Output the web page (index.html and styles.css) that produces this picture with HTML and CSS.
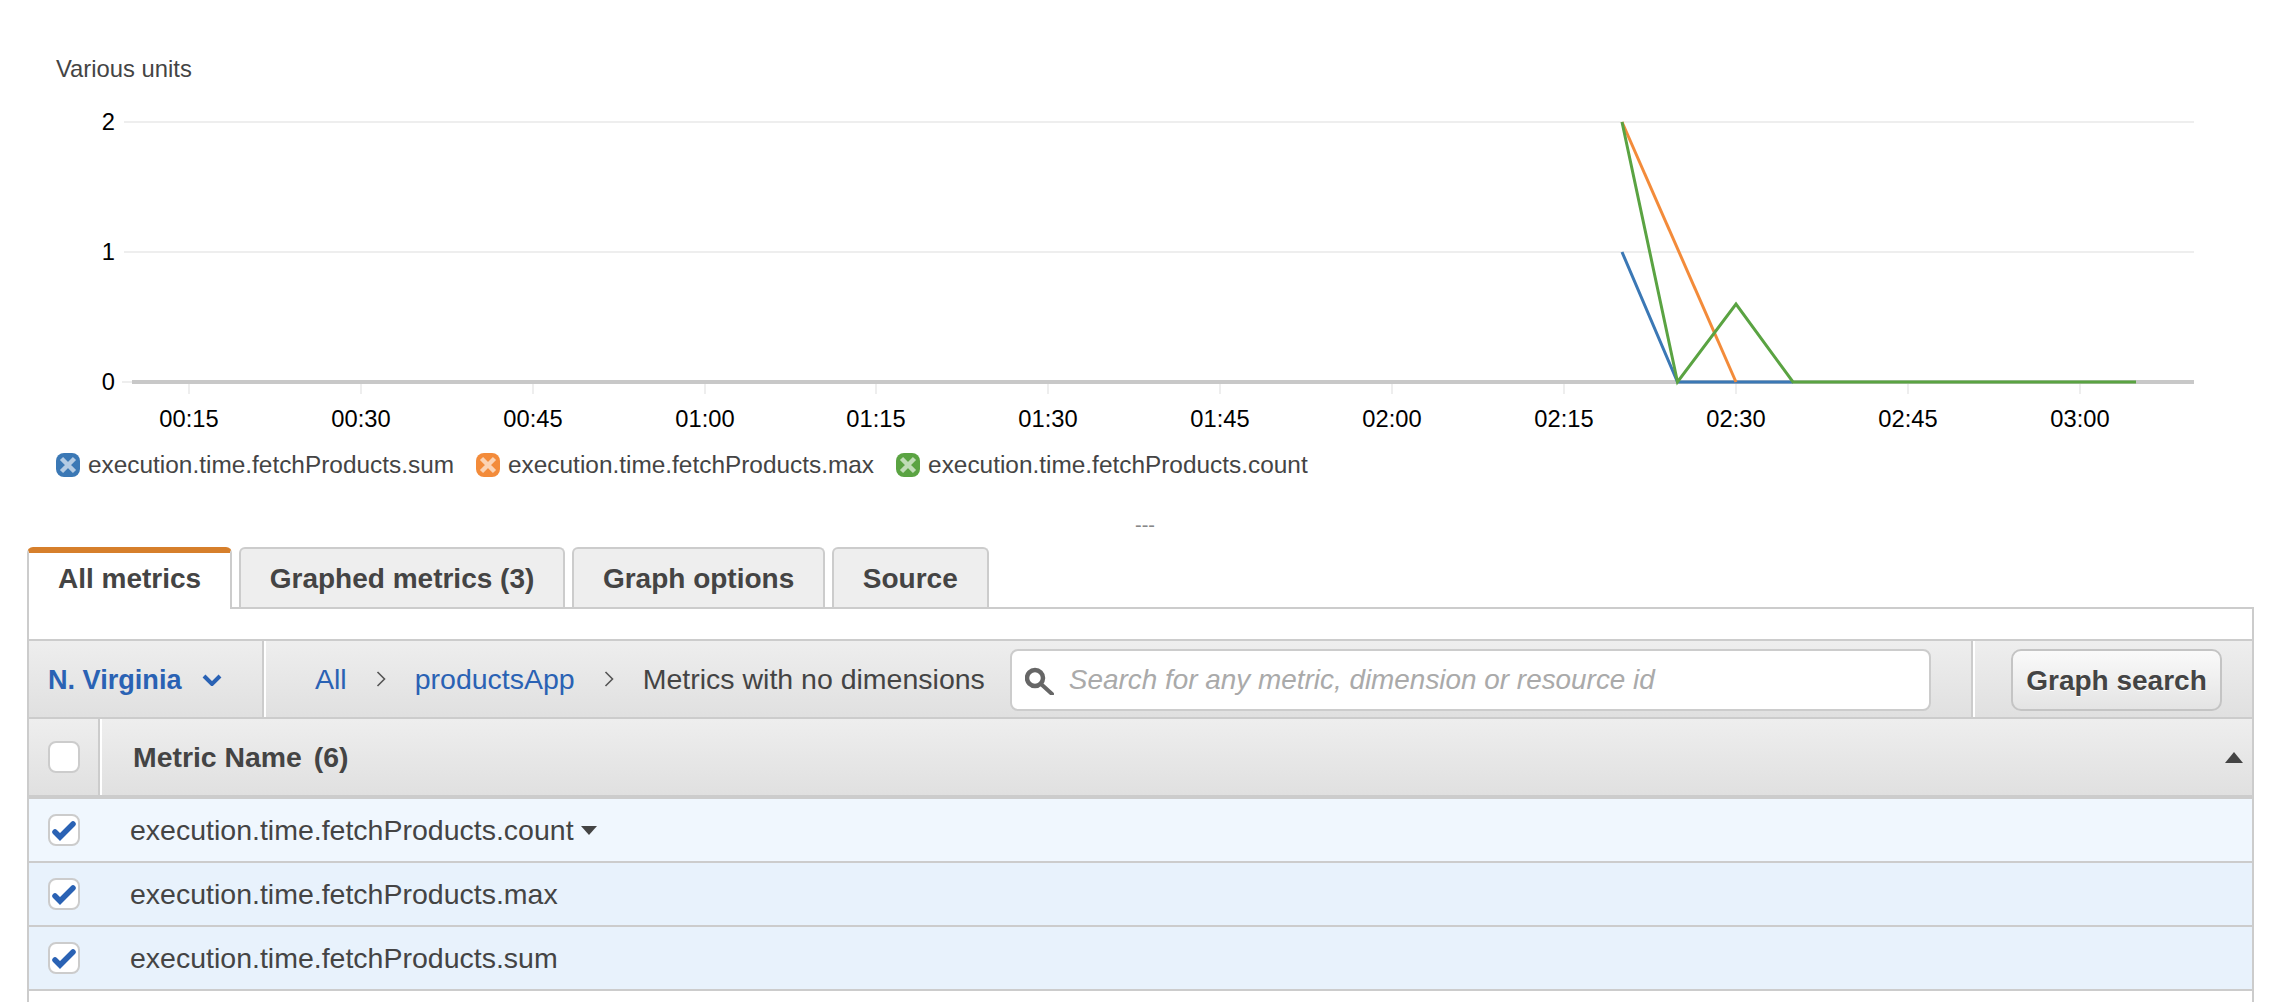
FILE: index.html
```html
<!DOCTYPE html>
<html>
<head>
	<meta charset="utf-8">
	<title>Metrics</title>
	<link rel="stylesheet" href="styles.css">
</head>
<body>
<div class="chart">
	<div class="units">Various units</div>
	<svg class="plot" width="2282" height="340" viewBox="0 100 2282 340">
		<g class="grid">
			<line x1="124" y1="122" x2="2194" y2="122"/>
			<line x1="124" y1="252" x2="2194" y2="252"/>
			<line x1="122" y1="382" x2="132" y2="382"/>
			<line x1="189" y1="384" x2="189" y2="394"/>
			<line x1="361" y1="384" x2="361" y2="394"/>
			<line x1="533" y1="384" x2="533" y2="394"/>
			<line x1="705" y1="384" x2="705" y2="394"/>
			<line x1="876" y1="384" x2="876" y2="394"/>
			<line x1="1048" y1="384" x2="1048" y2="394"/>
			<line x1="1220" y1="384" x2="1220" y2="394"/>
			<line x1="1392" y1="384" x2="1392" y2="394"/>
			<line x1="1564" y1="384" x2="1564" y2="394"/>
			<line x1="1736" y1="384" x2="1736" y2="394"/>
			<line x1="1908" y1="384" x2="1908" y2="394"/>
			<line x1="2080" y1="384" x2="2080" y2="394"/>
		</g>
		<line class="axis" x1="132" y1="382" x2="2194" y2="382"/>
		<g class="ylabels">
			<text x="115" y="130">2</text>
			<text x="115" y="260">1</text>
			<text x="115" y="390">0</text>
		</g>
		<g class="xlabels">
			<text x="189" y="427">00:15</text>
			<text x="361" y="427">00:30</text>
			<text x="533" y="427">00:45</text>
			<text x="705" y="427">01:00</text>
			<text x="876" y="427">01:15</text>
			<text x="1048" y="427">01:30</text>
			<text x="1220" y="427">01:45</text>
			<text x="1392" y="427">02:00</text>
			<text x="1564" y="427">02:15</text>
			<text x="1736" y="427">02:30</text>
			<text x="1908" y="427">02:45</text>
			<text x="2080" y="427">03:00</text>
		</g>
		<polyline class="series blue" points="1622,252 1677.5,382 1793,382"/>
		<polyline class="series orange" points="1622,122 1736,382"/>
		<polyline class="series green" points="1622,122 1677.5,382 1736,304 1793,382 2136,382"/>
	</svg>
	<div class="legend">
		<div class="legend-item">
			<svg class="legend-icon" width="24" height="24" viewBox="0 0 24 24"><rect width="24" height="24" rx="8" fill="#3b78b5"/><path d="M5.5 5.5l13 13M18.5 5.5l-13 13" class="cross"/></svg>
			<span>execution.time.fetchProducts.sum</span>
		</div>
		<div class="legend-item">
			<svg class="legend-icon" width="24" height="24" viewBox="0 0 24 24"><rect width="24" height="24" rx="8" fill="#f38b3a"/><path d="M5.5 5.5l13 13M18.5 5.5l-13 13" class="cross"/></svg>
			<span>execution.time.fetchProducts.max</span>
		</div>
		<div class="legend-item">
			<svg class="legend-icon" width="24" height="24" viewBox="0 0 24 24"><rect width="24" height="24" rx="8" fill="#5aa342"/><path d="M5.5 5.5l13 13M18.5 5.5l-13 13" class="cross"/></svg>
			<span>execution.time.fetchProducts.count</span>
		</div>
	</div>
</div>
<div class="divider">---</div>
<div class="metrics">
	<ul class="tabs">
		<li class="tab current">All metrics</li>
		<li class="tab">Graphed metrics (3)</li>
		<li class="tab">Graph options</li>
		<li class="tab">Source</li>
	</ul>
	<div class="panel">
		<div class="spacer"></div>
		<div class="toolbar">
			<div class="region">
				<span>N. Virginia</span>
				<svg width="20" height="12" viewBox="0 0 20 12"><path d="M2 2l8 8 8-8" fill="none" stroke="#2a62b4" stroke-width="4"/></svg>
			</div>
			<div class="crumbs">
				<a>All</a>
				<svg class="sep" width="10" height="16" viewBox="0 0 10 16"><path d="M1.5 1l7 7-7 7" fill="none" stroke="#555" stroke-width="1.6"/></svg>
				<a>productsApp</a>
				<svg class="sep" width="10" height="16" viewBox="0 0 10 16"><path d="M1.5 1l7 7-7 7" fill="none" stroke="#555" stroke-width="1.6"/></svg>
				<span>Metrics with no dimensions</span>
			</div>
			<div class="search">
				<svg width="29" height="29" viewBox="0 0 29 29"><circle cx="10" cy="12" r="8" fill="none" stroke="#666" stroke-width="4.5"/><path d="M16 18l11 10" stroke="#666" stroke-width="4" stroke-linecap="round"/></svg>
				<span>Search for any metric, dimension or resource id</span>
			</div>
			<div class="graph-cell">
				<div class="button">Graph search</div>
			</div>
		</div>
		<div class="head">
			<div class="check-cell"><div class="check"></div></div>
			<div class="head-name">
				<b>Metric Name</b><b class="total">(6)</b>
				<i class="sort"></i>
			</div>
		</div>
		<div class="row first">
			<div class="check-cell"><div class="check"><svg width="28" height="28" viewBox="0 0 28 28"><path d="M5 16l5 5L23 8" class="tick"/></svg></div></div>
			<div class="row-name">execution.time.fetchProducts.count<i class="more"></i></div>
		</div>
		<div class="row">
			<div class="check-cell"><div class="check"><svg width="28" height="28" viewBox="0 0 28 28"><path d="M5 16l5 5L23 8" class="tick"/></svg></div></div>
			<div class="row-name">execution.time.fetchProducts.max</div>
		</div>
		<div class="row">
			<div class="check-cell"><div class="check"><svg width="28" height="28" viewBox="0 0 28 28"><path d="M5 16l5 5L23 8" class="tick"/></svg></div></div>
			<div class="row-name">execution.time.fetchProducts.sum</div>
		</div>
		<div class="rest"></div>
	</div>
</div>
</body>
</html>
```

FILE: styles.css
```css
*{
	margin:0;
	padding:0;
	box-sizing:border-box;
	list-style:none;
}
html,body{
	height:1002px;
	overflow:hidden;
}
body{
	background:#fff;
	color:#444;
	font-family:"Liberation Sans",Arial,sans-serif;
	font-size:26px;
}
.chart{
	height:510px;
}
.units{
	height:100px;
	padding:55px 0 0 56px;
	font-size:23.8px;
	line-height:28px;
}
.plot{
	display:block;
}
.grid line{
	stroke:#eee;
	stroke-width:2;
}
.axis{
	stroke:#c8c8c8;
	stroke-width:4;
}
.plot text{
	font-size:23.7px;
	fill:#000;
}
.ylabels text{
	text-anchor:end;
}
.xlabels text{
	text-anchor:middle;
}
.series{
	fill:none;
	stroke-width:3;
}
.blue{
	stroke:#3b78b5;
}
.orange{
	stroke:#f38b3a;
}
.green{
	stroke:#5aa342;
}
.legend{
	display:flex;
	gap:22px;
	height:24px;
	margin:13px 0 0 56px;
}
.legend-item{
	display:flex;
	align-items:center;
	gap:8px;
	font-size:24.4px;
}
.legend-icon{
	flex:none;
}
.cross{
	fill:none;
	stroke:#fff;
	stroke-width:4.5;
	opacity:.62;
}
.divider{
	height:37px;
	line-height:30px;
	text-align:center;
	font-size:20px;
	color:#888;
	padding-left:8px;
}
.metrics{
	padding:0 28px 0 27px;
}
.tabs{
	display:flex;
	gap:6.6px;
	height:62px;
	position:relative;
}
.tab{
	height:60px;
	padding:0 29px;
	border:2px solid #ccc;
	border-bottom:none;
	border-radius:6px 6px 0 0;
	background:#eee;
	font-size:28px;
	font-weight:bold;
	line-height:60px;
}
.tab.current{
	height:62px;
	padding:0 29px;
	border-top:6px solid #d67f2b;
	background:#fff;
	line-height:52px;
	position:relative;
	z-index:1;
}
.panel{
	margin-top:-2px;
	border:2px solid #ccc;
	border-bottom:none;
}
.spacer{
	height:30px;
}
.toolbar{
	display:flex;
	height:80px;
	border-top:2px solid #ccc;
	border-bottom:2px solid #ccc;
	background:linear-gradient(#eee,#e0e0e0);
}
.region{
	display:flex;
	align-items:center;
	gap:20px;
	width:235px;
	padding:2px 0 0 19px;
	border-right:2px solid #ccc;
	color:#2a62b4;
	font-size:27.1px;
	font-weight:bold;
}
.crumbs{
	display:flex;
	align-items:center;
	border-left:2px solid #fff;
	padding-left:49px;
	font-size:28.5px;
	color:#444;
}
.crumbs a{
	color:#2a62b4;
}
.sep{
	margin:0 29px;
}
.search{
	display:flex;
	flex:1;
	align-items:center;
	gap:15px;
	height:62px;
	margin:8px 40px 0 25px;
	padding-left:13px;
	border:2px solid #ccc;
	border-radius:8px;
	background:#fff;
	color:#aaa;
	font-size:27.9px;
	font-style:italic;
}
.graph-cell{
	display:flex;
	padding:8px 30px 0 38px;
	border-left:2px solid #ccc;
	box-shadow:inset 2px 0 0 #fff;
}
.button{
	width:211px;
	height:62px;
	border:2px solid #c4c4c4;
	border-radius:10px;
	background:linear-gradient(#fafafa,#e4e4e4);
	font-size:28px;
	font-weight:bold;
	line-height:60px;
	text-align:center;
	text-shadow:0 1px 0 #fff;
}
.head{
	display:flex;
	height:80px;
	border-bottom:4px solid #ccc;
	background:linear-gradient(#eee,#e0e0e0);
}
.check-cell{
	display:flex;
	flex:none;
	align-items:center;
	width:69px;
	padding-left:19px;
}
.head .check-cell{
	width:71px;
	border-right:2px solid #ccc;
}
.check{
	display:flex;
	align-items:center;
	justify-content:center;
	width:32px;
	height:32px;
	border:2px solid #ccc;
	border-radius:8px;
	background:#fff;
}
.tick{
	fill:none;
	stroke:#2a62b4;
	stroke-width:5.5;
	stroke-linecap:round;
}
.head-name{
	display:flex;
	flex:1;
	align-items:center;
	padding:0 9px 0 31px;
	border-left:2px solid #fff;
	font-size:28.4px;
}
.total{
	margin-left:12px;
}
.sort{
	width:0;
	height:0;
	margin-left:auto;
	border-left:9px solid transparent;
	border-right:9px solid transparent;
	border-bottom:11px solid #444;
}
.row{
	display:flex;
	height:64px;
	border-bottom:2px solid #ccc;
	background:#e8f2fc;
}
.row.first{
	background:#f0f7fe;
}
.row-name{
	display:flex;
	align-items:center;
	padding-left:32px;
	font-size:28.5px;
}
.more{
	width:0;
	height:0;
	margin-left:7px;
	border-left:8px solid transparent;
	border-right:8px solid transparent;
	border-top:9px solid #444;
}
.rest{
	height:11px;
}
```
